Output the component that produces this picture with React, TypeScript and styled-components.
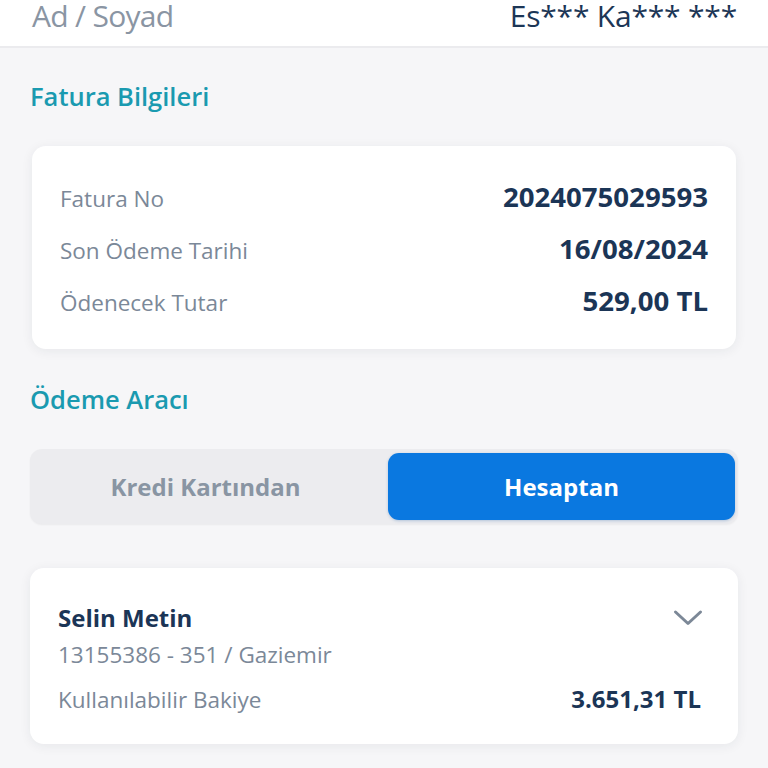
import React, { useState } from "react";
import styled, { createGlobalStyle } from "styled-components";

// 타입 선언
type Row = {
  label: string;
  value: string;
};

const invoiceRows: Row[] = [
  { label: "Fatura No", value: "2024075029593" },
  { label: "Son Ödeme Tarihi", value: "16/08/2024" },
  { label: "Ödenecek Tutar", value: "529,00 TL" },
];

// 컴포넌트 정의
export default function App() {
  const [method, setMethod] = useState<"card" | "account">("account");

  return (
    <Page>
      <GlobalStyle />
      <Header>
        <HeaderLabel>Ad / Soyad</HeaderLabel>
        <HeaderValue>Es*** Ka*** ***</HeaderValue>
      </Header>

      <Content>
        <SectionTitle>Fatura Bilgileri</SectionTitle>
        <InvoiceCard>
          {invoiceRows.map((row) => (
            <InfoRow key={row.label}>
              <Label>{row.label}</Label>
              <Value>{row.value}</Value>
            </InfoRow>
          ))}
        </InvoiceCard>

        <SectionTitle>Ödeme Aracı</SectionTitle>
        <Toggle>
          <ToggleButton
            $active={method === "card"}
            onClick={() => setMethod("card")}
          >
            Kredi Kartından
          </ToggleButton>
          <ToggleButton
            $active={method === "account"}
            onClick={() => setMethod("account")}
          >
            Hesaptan
          </ToggleButton>
        </Toggle>

        <AccountCard>
          <AccountTop>
            <AccountName>Selin Metin</AccountName>
            <Chevron viewBox="0 0 30 18" width="30" height="18">
              <polyline
                points="2.5,3 15,14.5 27.5,3"
                fill="none"
                stroke="#7c8897"
                strokeWidth="3"
                strokeLinecap="round"
                strokeLinejoin="round"
              />
            </Chevron>
          </AccountTop>
          <AccountNo>13155386 - 351 / Gaziemir</AccountNo>
          <BalanceRow>
            <Label>Kullanılabilir Bakiye</Label>
            <Balance>3.651,31 TL</Balance>
          </BalanceRow>
        </AccountCard>
      </Content>
    </Page>
  );
}

// Styled Components
const GlobalStyle = createGlobalStyle`
  body {
    margin: 0;
    background-color: #f6f6f8;
    font-family: "Open Sans", "Noto Sans", sans-serif;
  }
`;

const Page = styled.div`
  width: 768px;
  min-height: 768px;
  overflow: hidden;
  background-color: #f6f6f8;
`;

const Header = styled.div`
  height: 46px;
  background-color: #ffffff;
  border-bottom: 2px solid #ebebee;
  display: flex;
  justify-content: space-between;
  align-items: flex-start;
  padding: 0 31px 0 32px;
`;

const HeaderLabel = styled.div`
  font-size: 30px;
  line-height: 32px;
  letter-spacing: -0.7px;
  color: #8a95a3;
`;

const HeaderValue = styled.div`
  font-size: 30px;
  line-height: 32px;
  font-weight: 500;
  letter-spacing: -0.2px;
  color: #1c3656;
`;

const Content = styled.div`
  display: flex;
  flex-direction: column;
  padding: 31px 30px 0 30px;
`;

const SectionTitle = styled.div`
  font-size: 25.5px;
  line-height: 34px;
  font-weight: 600;
  color: #1a9ab0;
  margin-bottom: 33px;
`;

const InvoiceCard = styled.div`
  margin: 0 2px 33px 2px;
  padding: 24px 28px 23px 28px;
  background-color: #ffffff;
  border-radius: 14px;
  box-shadow: 0 2px 12px rgba(30, 40, 60, 0.07);
`;

const InfoRow = styled.div`
  height: 52px;
  display: flex;
  justify-content: space-between;
  align-items: baseline;
  line-height: 52px;
`;

const Label = styled.div`
  font-size: 22.5px;
  font-weight: 500;
  color: #7b8898;
`;

const Value = styled.div`
  font-size: 27.6px;
  font-weight: 700;
  color: #1b3556;
`;

const Toggle = styled.div`
  height: 75px;
  box-sizing: border-box;
  padding: 4px 3px 4px 4px;
  display: grid;
  grid-template-columns: 343fr 347fr;
  column-gap: 11px;
  background-color: #ececef;
  border-radius: 12px;
  box-shadow: 0 1px 2px rgba(0, 0, 0, 0.05);
  margin-bottom: 44px;
`;

const ToggleButton = styled.button<{ $active: boolean }>`
  border: none;
  border-radius: 11px;
  font-family: "Open Sans", "Noto Sans", sans-serif;
  font-size: 24px;
  font-weight: 700;
  cursor: pointer;
  color: ${(p) => (p.$active ? "#ffffff" : "#8995a3")};
  background-color: ${(p) => (p.$active ? "#0a78e0" : "transparent")};
  box-shadow: ${(p) => (p.$active ? "0 1px 3px rgba(10, 80, 160, 0.25)" : "none")};
`;

const AccountCard = styled.div`
  padding: 34px 37px 28px 28px;
  background-color: #ffffff;
  border-radius: 14px;
  box-shadow: 0 2px 12px rgba(30, 40, 60, 0.07);
  display: flex;
  flex-direction: column;
`;

const AccountTop = styled.div`
  display: flex;
  justify-content: space-between;
  align-items: center;
`;

const AccountName = styled.div`
  font-size: 24px;
  line-height: 32px;
  font-weight: 700;
  color: #1b3556;
`;

const Chevron = styled.svg`
  margin-right: -2px;
  display: block;
`;

const AccountNo = styled.div`
  margin-top: 6px;
  font-size: 22.5px;
  line-height: 30px;
  font-weight: 500;
  color: #7b8898;
`;

const BalanceRow = styled.div`
  margin-top: 13px;
  display: flex;
  justify-content: space-between;
  align-items: baseline;
  line-height: 32px;
`;

const Balance = styled.div`
  font-size: 24px;
  font-weight: 700;
  color: #1b3556;
`;
